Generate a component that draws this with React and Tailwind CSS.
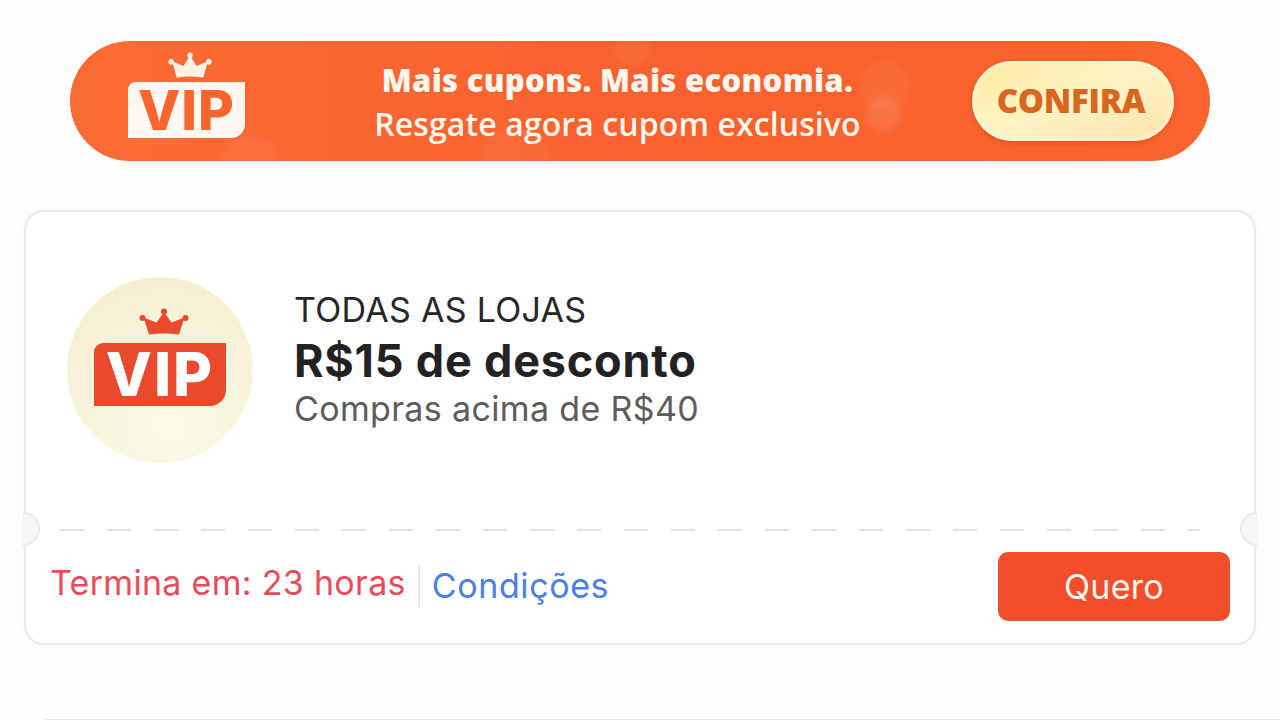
function Crown({ className, fill }) {
  return (
    <svg viewBox="0 0 50 27" preserveAspectRatio="none" className={className} fill={fill}>
      <circle cx="25" cy="3.5" r="3" />
      <circle cx="3.5" cy="10" r="3" />
      <circle cx="46.5" cy="10" r="3" />
      <path d="M25 4 L32.5 14.5 L45.5 9.5 L40 26.5 Q25 24.5 10 26.5 L4.5 9.5 L17.5 14.5 Z" />
    </svg>
  );
}

export default function App() {
  return (
    <div className="w-[1280px] h-[720px] overflow-hidden bg-[#fefefe] font-['Inter','Liberation_Sans',sans-serif]">
      <div className="pt-[41px] px-[70px]">
        {/* banner */}
        <div className="relative h-[120px] rounded-full overflow-hidden bg-gradient-to-r from-[#fb6c34] via-[#f9612e] to-[#f9652c] flex items-center">
          <div className="absolute left-[410px] top-[85px] w-[70px] h-[70px] rounded-full bg-white/5 blur-[3px]" />
          <div className="absolute left-[790px] top-[20px] w-[50px] h-[50px] rounded-full bg-white/5 blur-[3px]" />
          <div className="absolute left-[795px] top-[55px] w-[36px] h-[36px] rounded-full bg-white/10 blur-[3px]" />
          <div className="absolute left-[545px] top-[-10px] w-[36px] h-[36px] rounded-full bg-white/5 blur-[3px]" />
          <div className="absolute left-[150px] top-[95px] w-[60px] h-[60px] rounded-full bg-white/5 blur-[3px]" />

          <div className="relative ml-[58px] mb-[12px] w-[117px] flex flex-col items-center">
            <Crown className="w-[44px] h-[26px] mb-[4px] ml-[6px]" fill="#fff3e6" />
            <div className="w-full h-[56px] bg-[#fff8f2] rounded-tl-[8px] rounded-br-[14px] flex items-center justify-center text-[#f9652c] font-extrabold text-[55px] leading-none tracking-[1px]">
              VIP
            </div>
          </div>

          <div className="relative w-[487px] ml-[129px] mt-[2px] flex flex-col items-center font-['Open_Sans',sans-serif] text-[#fff6ee] whitespace-nowrap">
            <div className="text-[31px] leading-[44px] font-extrabold tracking-[0.3px]">Mais cupons. Mais economia.</div>
            <div className="text-[32px] leading-[44px] font-semibold tracking-[0.1px]">Resgate agora cupom exclusivo</div>
          </div>

          <div className="relative ml-[111px] w-[202px] h-[80px] pr-[4px] rounded-full bg-gradient-to-br from-[#fdeb9f] via-[#fdf3c4] to-[#fbe3ac] shadow-[inset_0_0_6px_#fff,0_2px_5px_rgba(190,70,20,0.5)] flex items-center justify-center text-[#d9661f] font-['Open_Sans',sans-serif] font-extrabold text-[33px] tracking-[-0.3px]">
            CONFIRA
          </div>
        </div>
      </div>

      {/* coupon */}
      <div className="px-[24px] mt-[49px]">
        <div className="relative h-[435px] rounded-[20px] border-2 border-[#e9e9e9] bg-white shadow-[0_0_14px_rgba(0,0,0,0.03)] flex flex-col">
          <div className="absolute left-[-3px] top-[300px] w-[17px] h-[34px] rounded-r-full border-2 border-l-0 border-[#e9e9e9] bg-[#f6f6f6]" />
          <div className="absolute right-[-3px] top-[300px] w-[17px] h-[34px] rounded-l-full border-2 border-r-0 border-[#e9e9e9] bg-[#f6f6f6]" />

          <div className="h-[317px] flex items-center pl-[41px]">
            <div className="mb-[2px] w-[186px] h-[186px] rounded-full bg-[radial-gradient(circle_at_55%_80%,#fbfbea,#f7f2d8_60%,#f3ebcb)] flex flex-col items-center pt-[31px] shrink-0">
              <Crown className="w-[50px] h-[27px] mb-[8px] ml-[8px]" fill="#ea4a2c" />
              <div className="w-[132px] h-[63px] bg-[#ea4a2c] rounded-tl-[9px] rounded-br-[16px] flex items-center justify-center text-white font-extrabold text-[60px] leading-none tracking-[2px]">
                VIP
              </div>
            </div>
            <div className="ml-[41px] mb-[24px] whitespace-nowrap">
              <div className="text-[34px] leading-[50px] text-[#262626] tracking-[0.3px]">TODAS AS LOJAS</div>
              <div className="text-[45px] leading-[51px] font-bold text-[#222222] tracking-[0.8px]">R$15 de desconto</div>
              <div className="text-[34px] leading-[46px] text-[#5c5c5c] tracking-[0.35px]">Compras acima de R$40</div>
            </div>
          </div>

          <div className="ml-[34px] mr-[54px] h-[2px] bg-[repeating-linear-gradient(to_right,#e2e2e2_0,#e2e2e2_24px,transparent_24px,transparent_47px)]" />

          <div className="flex items-center pl-[24px] pr-[24px] pt-[21px]">
            <span className="text-[34px] leading-[44px] text-[#ea4b5c] tracking-[0.3px] whitespace-nowrap mb-[8px]">Termina em: 23 horas</span>
            <span className="w-[2px] h-[42px] bg-[#e6e6e6] ml-[12px] mr-[12px] mb-[2px]" />
            <span className="text-[34px] leading-[44px] text-[#4a80e2] tracking-[0.6px] whitespace-nowrap mb-[2px]">Condições</span>
            <button className="ml-auto w-[232px] h-[69px] rounded-[10px] bg-[#f04e2c] text-[#fff6ee] text-[34px] tracking-[0.3px]">Quero</button>
          </div>
        </div>
      </div>

      <div className="ml-[44px] mt-[74px] h-[1px] bg-[#e6e6e6]" />
    </div>
  );
}
